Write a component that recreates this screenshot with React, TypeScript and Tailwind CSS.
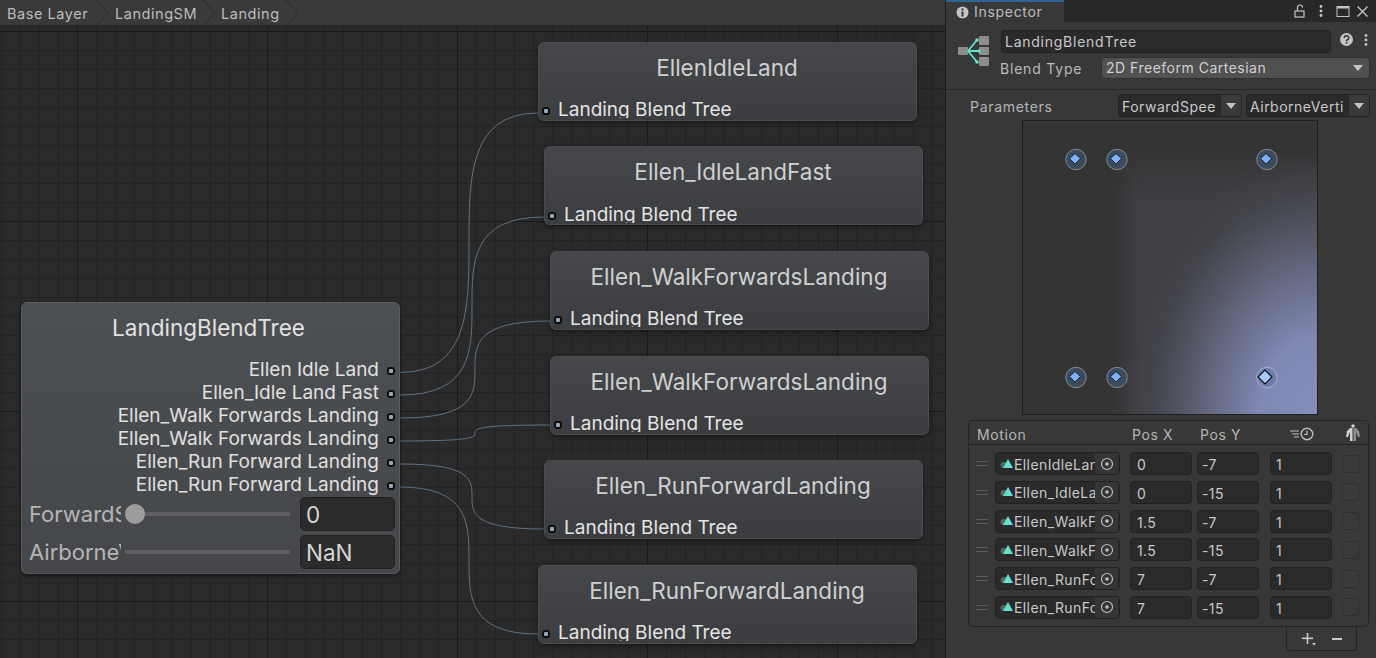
import React from "react";

const FONT = "font-['Inter','Noto_Sans',sans-serif]";

function Port() {
  return (
    <span className="flex w-[8px] h-[8px] items-center justify-center rounded-[3px] bg-[#0e0e0e] shrink-0">
      <span className="block w-[4px] h-[4px] bg-[#93a8be] rounded-[1px]" />
    </span>
  );
}

function ChildNode({ title, pos, row = "mt-[7px]" }: { title: string; pos: string; row?: string }) {
  return (
    <div className={`absolute ${pos} w-[379px] h-[79px] rounded-[6px] border border-[#4a4c50] bg-gradient-to-b from-[#45474a] to-[#3b3d40] shadow-[0_2px_4px_rgba(0,0,0,0.45)] flex flex-col`}>
      <div className="h-[50px] pt-[9px] pr-[1px] text-center text-[22.5px] leading-[32px] text-[#cfd0d1]">{title}</div>
      <div className={`flex items-center pl-[3px] gap-[8px] h-[18px] ${row} overflow-hidden`}>
        <span className="mt-[3px]"><Port /></span>
        <span className="mt-[2px] text-[19px] leading-[24px] text-[#e4e4e4] whitespace-nowrap">Landing Blend Tree</span>
      </div>
    </div>
  );
}

function OutRow({ label }: { label: string }) {
  return (
    <div className="flex h-[23px] items-center justify-end gap-[8px] pr-[4px]">
      <span className="text-[19px] leading-[23px] text-[#e0e0e0] whitespace-nowrap">{label}</span>
      <span className="mt-[2px]"><Port /></span>
    </div>
  );
}

function SliderRow({ label, value, thumb }: { label: string; value: string; thumb?: boolean }) {
  return (
    <div className="flex items-center h-[34px] pl-[7px]">
      <div className="w-[92px] overflow-hidden whitespace-nowrap text-[22px] text-[#b4b5b6]">{label}</div>
      <div className="ml-auto w-[165px] h-[4px] bg-[#5e6062] relative mr-[10px]">
        {thumb && <span className="absolute left-0 top-[-8px] w-[20px] h-[20px] rounded-full bg-[#9c9c9c]" />}
      </div>
      <div className="w-[95px] h-[34px] rounded-[5px] bg-[#2b2b2b] border border-[#212121] pl-[5px] mr-[4px] text-[22.5px] leading-[34px] text-[#d6d6d6]">{value}</div>
    </div>
  );
}

function Edges() {
  const edges: [number, number, number][] = [
    [346.5, 538, 87],
    [369, 544, 191],
    [392, 550, 295],
    [415, 550, 399],
    [438, 544, 503],
    [461, 538, 608],
  ];
  return (
    <svg className="absolute left-0 top-0 w-[945px] h-[632px]" viewBox="0 0 945 632" fill="none">
      {edges.map(([y0, x1, y1]) => (
        <path key={`${y0}`} d={`M400 ${y0} C ${x1} ${y0} 400 ${y1} ${x1} ${y1}`} stroke="#5f7286" strokeWidth="1" />
      ))}
    </svg>
  );
}

function Breadcrumb() {
  const chev = [96, 203, 286];
  return (
    <div className="relative h-[26px] shrink-0 bg-[#3a3a3a] border-b border-[#242424] text-[14.5px] leading-[27px] tracking-[0.55px] text-[#bdbdbd]">
      <div className="flex h-full">
        <span className="pl-[7px] w-[115px]">Base Layer</span>
        <span className="w-[106px]">LandingSM</span>
        <span>Landing</span>
      </div>
      <svg className="absolute left-0 top-0 w-[320px] h-[26px]" viewBox="0 0 320 26" fill="none">
        {chev.map((x) => (
          <path key={x} d={`M${x} 0 L${x + 12} 13 L${x} 26`} stroke="#2a2a2a" strokeWidth="1" />
        ))}
      </svg>
    </div>
  );
}

function MainNode() {
  return (
    <div className="absolute left-[21px] top-[276px] w-[379px] h-[272px] rounded-[6px] border border-[#5a5c60] bg-gradient-to-b from-[#4c4f53] to-[#45474a] shadow-[0_2px_4px_rgba(0,0,0,0.45)] flex flex-col">
      <div className="h-[55px] pt-[8px] pr-[4px] text-center text-[22.5px] leading-[34px] text-[#e2e2e2]">LandingBlendTree</div>
      {["Ellen Idle Land", "Ellen_Idle Land Fast", "Ellen_Walk Forwards Landing", "Ellen_Walk Forwards Landing", "Ellen_Run Forward Landing", "Ellen_Run Forward Landing"].map((l, i) => (
        <OutRow key={i} label={l} />
      ))}
      <div className="mt-[1px] flex flex-col gap-[4px]">
        <SliderRow label="ForwardSpeed" value="0" thumb />
        <SliderRow label="AirborneVertical" value="NaN" />
      </div>
    </div>
  );
}

function BlendGraph() {
  const pts: [number, number][] = [[53, 38.5], [94, 38.5], [244, 38.5], [53, 256.5], [94, 256.5]];
  return (
    <svg className="block w-[296px] h-[295px]" viewBox="0 0 296 295">
      <defs>
        <radialGradient id="glow" gradientUnits="userSpaceOnUse" cx="0" cy="0" r="1" gradientTransform="translate(296 295) scale(200 267)">
          <stop offset="0" stopColor="#868ebd" />
          <stop offset="0.3" stopColor="#7f87b3" />
          <stop offset="0.6" stopColor="#5e6276" />
          <stop offset="0.85" stopColor="#43444a" stopOpacity="0.7" />
          <stop offset="1" stopColor="#3e3f43" stopOpacity="0" />
        </radialGradient>
        <radialGradient id="plateau" gradientUnits="userSpaceOnUse" cx="0" cy="0" r="1" gradientTransform="translate(296 295) scale(200 255)">
          <stop offset="0" stopColor="#4c4e5a" />
          <stop offset="0.7" stopColor="#484a54" />
          <stop offset="1" stopColor="#44454c" stopOpacity="0" />
        </radialGradient>
        <linearGradient id="top" gradientUnits="userSpaceOnUse" x1="0" y1="30" x2="0" y2="80">
          <stop offset="0" stopColor="#343434" />
          <stop offset="1" stopColor="#3f4045" />
        </linearGradient>
        <linearGradient id="fade" gradientUnits="userSpaceOnUse" x1="92" y1="0" x2="116" y2="0">
          <stop offset="0" stopColor="#343434" />
          <stop offset="1" stopColor="#343434" stopOpacity="0" />
        </linearGradient>
      </defs>
      <rect width="296" height="295" fill="#343434" />
      <rect x="92" width="204" height="295" fill="url(#top)" />
      <rect x="92" width="204" height="295" fill="url(#plateau)" />
      <rect x="92" width="204" height="295" fill="url(#glow)" />
      <rect x="92" width="24" height="295" fill="url(#fade)" />
      {pts.map(([x, y]) => (
        <g key={`${x}-${y}`}>
          <circle cx={x} cy={y} r="10.2" fill="#3c4a5e" stroke="#868b92" strokeWidth="1" />
          <path d={`M${x - 1} ${y - 6} L${x + 4.5} ${y - 1} L${x - 1} ${y + 4.5} L${x - 6.5} ${y - 1} Z`} fill="#7db2fa" stroke="#1a2430" strokeWidth="1" />
        </g>
      ))}
      <circle cx="244" cy="256.5" r="10.2" fill="#6e7ea8" stroke="#a9b2d0" strokeWidth="1" />
      <path d="M242 249 L249 256 L242 263 L235 256 Z" fill="#a6cbfb" stroke="#0f1318" strokeWidth="1.2" />
    </svg>
  );
}

function MotionRow({ name, x, y }: { name: string; x: string; y: string }) {
  return (
    <div className="flex items-center h-[23px]">
      <div className="w-[19px] ml-[7px] flex flex-col gap-[3px]">
        <span className="block w-[12px] h-[1px] bg-[#5c5c5c]" />
        <span className="block w-[12px] h-[1px] bg-[#5c5c5c]" />
      </div>
      <div className="w-[125px] h-[23px] rounded-[4px] bg-[#2a2a2a] border border-[#212121] flex items-center overflow-hidden">
        <svg className="w-[14px] h-[12px] ml-[4px] shrink-0" viewBox="0 0 14 12">
          <ellipse cx="4" cy="7" rx="3.5" ry="3" fill="#5e6664" />
          <path d="M8 1 L13 10 L3 10 Z" fill="#5fe3cf" />
        </svg>
        <span className="w-[81px] pt-[1px] overflow-hidden whitespace-nowrap text-[14px] tracking-[0.4px] text-[#c8c8c8]">{name}</span>
        <span className="w-[23px] h-full bg-[#353535] flex items-center justify-center shrink-0">
          <svg className="w-[14px] h-[14px]" viewBox="0 0 14 14" fill="none">
            <circle cx="7" cy="7" r="5.5" stroke="#bdbdbd" strokeWidth="1.2" />
            <circle cx="7" cy="7" r="1.8" fill="#bdbdbd" />
          </svg>
        </span>
      </div>
      <div className="ml-[10px] w-[62px] h-[23px] rounded-[4px] bg-[#2a2a2a] border border-[#212121] pl-[6px] text-[14px] leading-[23px] tracking-[0.4px] text-[#c8c8c8]">{x}</div>
      <div className="ml-[5px] w-[62px] h-[23px] rounded-[4px] bg-[#2a2a2a] border border-[#212121] pl-[4px] text-[14px] leading-[23px] tracking-[0.4px] text-[#c8c8c8]">{y}</div>
      <div className="ml-[11px] w-[62px] h-[23px] rounded-[4px] bg-[#2a2a2a] border border-[#212121] pl-[5px] text-[14px] leading-[23px] text-[#c8c8c8]">1</div>
      <div className="ml-[10px] w-[17px] h-[18px] rounded-[3px] bg-[#393939] border border-[#2e2e2e]" />
    </div>
  );
}

function Inspector() {
  const rows = [
    ["EllenIdleLand", "0", "-7"],
    ["Ellen_IdleLandFast", "0", "-15"],
    ["Ellen_WalkForwards", "1.5", "-7"],
    ["Ellen_WalkForwards", "1.5", "-15"],
    ["Ellen_RunForward", "7", "-7"],
    ["Ellen_RunForward", "7", "-15"],
  ];
  return (
    <aside className="w-[431px] h-[658px] shrink-0 bg-[#383838] border-l border-[#1c1c1c] flex flex-col text-[14px] text-[#bcbcbc]">
      <div className="h-[22px] bg-[#282828] flex shrink-0">
        <div className="w-[118px] h-[22px] bg-[#383838] border-t-2 border-[#2f6497] flex items-center pl-[10px] gap-[5px] text-[14px] leading-[16px] tracking-[0.7px] text-[#bdbdbd]">
          <svg className="w-[13px] h-[13px]" viewBox="0 0 13 13">
            <circle cx="6.5" cy="6.5" r="6" fill="#c4c4c4" />
            <rect x="5.5" y="5.5" width="2" height="5" fill="#383838" />
            <rect x="5.5" y="2.5" width="2" height="2" fill="#383838" />
          </svg>
          Inspector
        </div>
        <div className="ml-auto flex items-center pr-[7px]">
          <svg className="mr-[12px] w-[14px] h-[14px]" viewBox="0 0 14 14" fill="none" stroke="#c4c4c4" strokeWidth="1.2">
            <rect x="2" y="7" width="9" height="6" />
            <path d="M4.5 7 V3.5 A2.5 2.5 0 0 1 9.5 3.5" />
          </svg>
          <svg className="mr-[13px] w-[4px] h-[14px]" viewBox="0 0 4 14" fill="#c4c4c4">
            <circle cx="2" cy="2.5" r="1.4" /><circle cx="2" cy="7" r="1.4" /><circle cx="2" cy="11.5" r="1.4" />
          </svg>
          <svg className="mr-[6px] w-[14px] h-[13px]" viewBox="0 0 14 13" fill="none" stroke="#c4c4c4">
            <rect x="1" y="1.5" width="12" height="10" strokeWidth="1" />
            <rect x="1" y="1" width="12" height="2.5" fill="#c4c4c4" strokeWidth="0" />
          </svg>
          <svg className="w-[13px] h-[13px]" viewBox="0 0 13 13" fill="none" stroke="#c4c4c4" strokeWidth="1.4">
            <path d="M1.5 1.5 L11.5 11.5 M11.5 1.5 L1.5 11.5" />
          </svg>
        </div>
      </div>

      <div className="relative h-[68px] shrink-0 border-b border-[#262626]">
        <svg className="absolute left-[12px] top-[13px] w-[32px] h-[32px]" viewBox="0 0 32 32" fill="none">
          <rect x="21" y="1" width="10" height="9" rx="1" fill="#8d8d8d" />
          <rect x="21" y="12" width="10" height="8" rx="1" fill="#8d8d8d" />
          <rect x="21" y="22" width="10" height="9" rx="1" fill="#8d8d8d" />
          <rect x="0" y="12" width="10" height="8" rx="1" fill="#8d8d8d" />
          <path d="M10 16 L19 5 M10 16 H21 M10 16 L19 27" stroke="#5fe3cf" strokeWidth="1.8" />
          <circle cx="19" cy="5" r="1.8" fill="#5fe3cf" /><circle cx="21" cy="16" r="1.8" fill="#5fe3cf" /><circle cx="19" cy="27" r="1.8" fill="#5fe3cf" />
        </svg>
        <div className="pl-[55px] pt-[8px] flex items-center">
          <div className="w-[330px] h-[23px] rounded-[4px] bg-[#2a2a2a] border border-[#212121] pl-[3px] leading-[21px] tracking-[0.75px] text-[#c8c8c8]">LandingBlendTree</div>
          <svg className="ml-[9px] w-[13px] h-[13px] mb-[4px]" viewBox="0 0 13 13">
            <circle cx="6.5" cy="6.5" r="6.5" fill="#c4c4c4" />
            <path d="M4.3 5 A2.2 2.2 0 1 1 7 7 L6.5 7.6 V8.2" stroke="#383838" strokeWidth="1.5" fill="none" />
            <rect x="5.7" y="9" width="1.6" height="1.6" fill="#383838" />
          </svg>
          <svg className="ml-[11px] w-[4px] h-[14px] mb-[4px]" viewBox="0 0 4 14" fill="#c4c4c4">
            <circle cx="2" cy="2.5" r="1.4" /><circle cx="2" cy="7" r="1.4" /><circle cx="2" cy="11.5" r="1.4" />
          </svg>
        </div>
        <div className="flex items-center pl-[54px] mt-[4px]">
          <span className="w-[101px] tracking-[0.8px] text-[#bababa]">Blend Type</span>
          <div className="w-[269px] h-[22px] rounded-[4px] bg-[#515151] border border-[#303030] pl-[4px] pr-[6px] flex items-center justify-between tracking-[0.5px] leading-[20px] text-[#d0d0d0]">
            <span>2D Freeform Cartesian</span>
            <span className="w-0 h-0 border-l-[5px] border-r-[5px] border-t-[6px] border-l-transparent border-r-transparent border-t-[#c4c4c4]" />
          </div>
        </div>
      </div>

      <div className="flex items-center h-[23px] mt-[4px] pl-[24px] shrink-0">
        <span className="w-[148px] pt-[2px] tracking-[0.7px] text-[#b5b5b5]">Parameters</span>
        {[["ForwardSpeed", "w-[124px]"], ["AirborneVertical", "w-[124px] ml-[4px]"]].map(([t, c]) => (
          <div key={t} className={`${c} h-[23px] rounded-[4px] bg-[#2a2a2a] border border-[#212121] flex items-center overflow-hidden`}>
            <span className="flex-1 min-w-0 ml-[3px] mr-[5px] pt-[2px] overflow-hidden whitespace-nowrap tracking-[0.5px] text-[#c8c8c8]">{t}</span>
            <span className="w-[20px] h-full bg-[#3a3a3a] flex items-center justify-center shrink-0">
              <span className="w-0 h-0 border-l-[5px] border-r-[5px] border-t-[6px] border-l-transparent border-r-transparent border-t-[#c4c4c4]" />
            </span>
          </div>
        ))}
      </div>

      <div className="ml-[76px] mt-[3px] w-[296px] h-[295px] border border-[#1f1f1f] box-border shrink-0 overflow-hidden">
        <BlendGraph />
      </div>

      <div className="ml-[22px] mt-[5px] w-[401px] h-[207px] rounded-[4px] border border-[#242424] shrink-0">
        <div className="flex items-center h-[24px] border-b border-[#242424] pl-[8px] pt-[3px] tracking-[0.6px] text-[#b5b5b5]">
          <span className="w-[155px]">Motion</span>
          <span className="w-[68px]">Pos X</span>
          <span className="w-[89px]">Pos Y</span>
          <svg className="w-[26px] h-[14px]" viewBox="0 0 26 14" fill="none" stroke="#bdbdbd">
            <path d="M1 4 H10 M3 7 H10 M5 10 H10" strokeWidth="1" />
            <circle cx="18" cy="7" r="5.8" strokeWidth="1.4" />
            <path d="M18 3.5 V7.5 H15" strokeWidth="1.2" />
          </svg>
          <svg className="ml-[30px] w-[16px] h-[18px] mb-[2px]" viewBox="0 0 16 18" fill="#d0d0d0">
            <circle cx="8" cy="2" r="1.8" />
            <path d="M7.5 4 H5 L2 7 L1 13 L3 13 L5 8 L5 17 L7.5 17 Z" />
            <path d="M8.5 4 H11 L14 7 L15 13 L13 13 L11 8 L11 17 L8.5 17 Z" fill="#8f8f8f" />
          </svg>
        </div>
        <div className="pt-[7px] flex flex-col gap-[5.75px]">
          {rows.map(([n, x, y], i) => (
            <MotionRow key={i} name={n} x={x} y={y} />
          ))}
        </div>
      </div>
      <div className="ml-[340px] w-[71px] h-[24px] rounded-b-[4px] border border-t-0 border-[#242424] flex items-center justify-center gap-[15px] pr-[1px]">
        <svg className="w-[16px] h-[16px]" viewBox="0 0 16 16" fill="#c8c8c8">
          <rect x="1" y="6.5" width="11" height="1.6" /><rect x="5.7" y="2" width="1.6" height="11" />
          <path d="M11 12 H15 L13 14.5 Z" />
        </svg>
        <span className="block w-[10px] h-[2px] bg-[#c8c8c8]" />
      </div>
    </aside>
  );
}

export default function App() {
  return (
    <div className={`${FONT} flex w-[1376px] h-[658px] overflow-hidden bg-[#282828]`}>
      <main className="w-[945px] h-[658px] shrink-0 flex flex-col">
        <Breadcrumb />
        <div className="relative flex-1 overflow-hidden bg-[#2a2a2a] bg-[linear-gradient(#191919_1px,transparent_1px),linear-gradient(90deg,#191919_1px,transparent_1px),linear-gradient(#232323_1px,transparent_1px),linear-gradient(90deg,#232323_1px,transparent_1px)] [background-size:190px_190px,190px_190px,19px_19px,19px_19px] [background-position:77px_5px,77px_5px,1px_5px,1px_5px]">
          <Edges />
          <ChildNode title="EllenIdleLand" pos="left-[538px] top-[16px]" />
          <ChildNode title="Ellen_IdleLandFast" pos="left-[544px] top-[120px]" row="mt-[8px]" />
          <ChildNode title="Ellen_WalkForwardsLanding" pos="left-[550px] top-[225px]" />
          <ChildNode title="Ellen_WalkForwardsLanding" pos="left-[550px] top-[330px]" />
          <ChildNode title="Ellen_RunForwardLanding" pos="left-[544px] top-[434px]" />
          <ChildNode title="Ellen_RunForwardLanding" pos="left-[538px] top-[539px]" />
          <MainNode />
        </div>
      </main>
      <Inspector />
    </div>
  );
}
